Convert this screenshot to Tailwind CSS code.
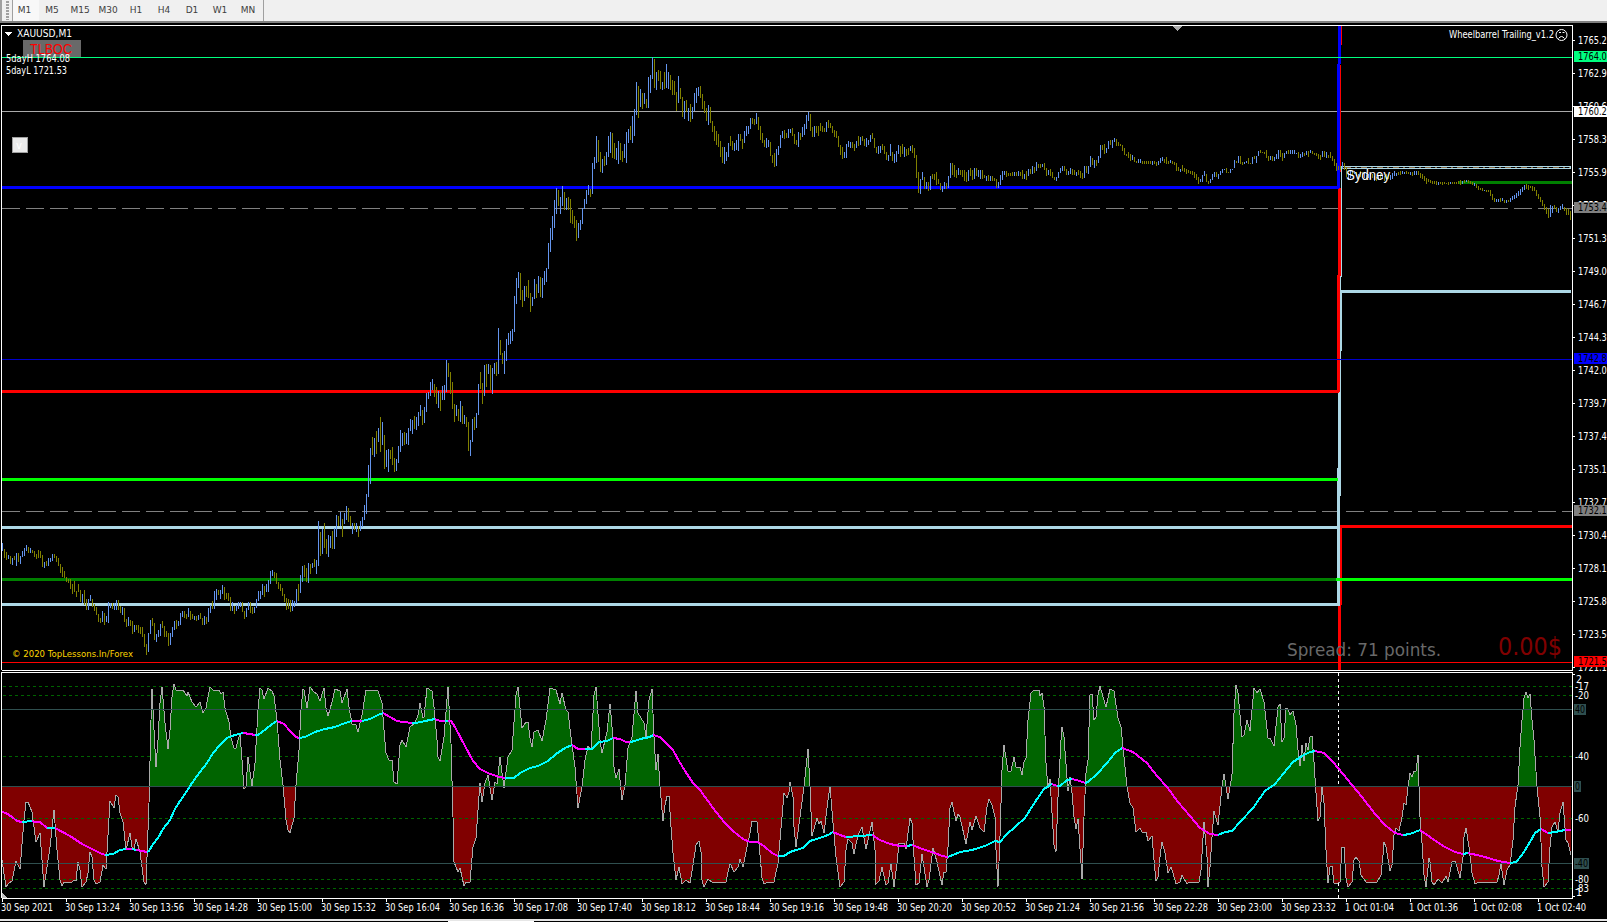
<!DOCTYPE html>
<html lang="en">
<head>
  <meta charset="UTF-8" />
  <meta name="viewport" content="width=device-width, initial-scale=1.0"/>
  <title>XAUUSD,M1</title>
  <script src="https://cdn.jsdelivr.net/npm/@tailwindcss/browser@4"></script>
</head>
<body class="bg-black w-[1607px] h-[922px] overflow-hidden flex flex-col font-['DejaVu_Sans',sans-serif]">

  <header class="h-[23px] shrink-0 flex bg-[#f0f0f0] border-b-2 border-[#808080] text-[#404040]">
    <div class="w-[10px] flex items-center border-l-2 border-[#a0a0a0] pl-1">
      <div class="w-[3px] h-[19px] bg-[repeating-linear-gradient(#a0a0a0_0_2px,#f0f0f0_2px_3px)]"></div>
    </div>
    <nav class="flex h-[21px] text-[9px] leading-[20px] text-center border-r border-[#a0a0a0] w-[254px]">
      <span class="w-[27px] ml-[2px] -mr-px border-l border-[#a0a0a0] bg-[#f8f8f8] pr-[3px]">M1</span>
      <span class="w-7">M5</span>
      <span class="w-7">M15</span>
      <span class="w-7">M30</span>
      <span class="w-7">H1</span>
      <span class="w-7">H4</span>
      <span class="w-7">D1</span>
      <span class="w-7">W1</span>
      <span class="w-7">MN</span>
    </nav>
  </header>

  <main class="h-[896px] shrink-0">
    <svg id="chart" class="block" width="1607" height="896" viewBox="0 23 1607 896" shape-rendering="crispEdges">
      <defs>
        <clipPath id="above"><rect x="2" y="673" width="1570" height="113"/></clipPath>
        <clipPath id="below"><rect x="2" y="787" width="1570" height="111"/></clipPath>
      </defs>

      <!-- price levels -->
      <g id="levels">
        <rect x="2" y="57" width="1570" height="1" fill="#00ff7f"/>
        <rect x="2" y="111" width="1570" height="1" fill="#a9a9a9"/>
        <rect x="2" y="359" width="1570" height="1" fill="#0000cd"/>
        <rect x="2" y="662" width="1570" height="1" fill="#ff0000"/>
        <path d="M2 208.5H1572M2 511.5H1572" stroke="#808080" stroke-dasharray="18 6"/>

        <rect x="1338" y="605" width="3" height="65" fill="#ff0000"/>
        <rect x="1340" y="525" width="2" height="80" fill="#ff0000"/>
        <rect x="1340" y="525" width="232" height="3" fill="#ff0000"/>
        <rect x="1341" y="26" width="1" height="19" fill="#ff0000"/>
        <rect x="1340" y="65" width="1" height="107" fill="#ff0000"/>
        <rect x="1341" y="166" width="1" height="111" fill="#add8e6"/>
        <rect x="1338" y="188" width="3" height="88" fill="#ff0000"/>
        <rect x="1340" y="276" width="1" height="117" fill="#add8e6"/>
        <rect x="1341" y="291" width="1" height="60" fill="#add8e6"/>
        <rect x="1338" y="392" width="3" height="104" fill="#add8e6"/>
        <rect x="1337" y="468" width="3" height="138" fill="#add8e6"/>
        <rect x="1337" y="275" width="3" height="117" fill="#ff0000"/>
        <rect x="2" y="390" width="1337" height="3" fill="#ff0000"/>
        <rect x="2" y="478" width="1336" height="3" fill="#00ff00"/>
        <rect x="2" y="526" width="1336" height="3" fill="#add8e6"/>
        <rect x="2" y="603" width="1337" height="3" fill="#add8e6"/>
        <rect x="2" y="578" width="1334" height="3" fill="#008000"/>
        <rect x="1336" y="578" width="236" height="3" fill="#00ff00"/>
        <rect x="1341" y="290" width="230" height="3" fill="#add8e6"/>
        <rect x="1337" y="64" width="3" height="124" fill="#0000ff"/>
        <rect x="1338" y="26" width="3" height="38" fill="#0000ff"/>
        <rect x="2" y="186" width="1337" height="3" fill="#0000ff"/>
        <rect x="1338" y="57" width="3" height="1" fill="#00ff7f"/>
        <rect x="1337" y="359" width="4" height="1" fill="#0000cd"/>
        <path d="M1341 166.500H1571M1341 168.500H1571M1570.500 166V169" stroke="#add8e6"/>
        <path d="M1345 167.500H1570" stroke="#8b6f4a" stroke-dasharray="6 4 2 4"/>
        <rect x="1458" y="181" width="114" height="3" fill="#008000"/>
      </g>

      <path id="bars-up" stroke="#6495ed" fill="none"/>
      <path id="bars-down" stroke="#808000" fill="none"/>

      <!-- oscillator -->
      <path d="M1338.500 673V898" stroke="#fff" stroke-dasharray="3 3"/>
      <polygon id="osc-up" fill="#006400" clip-path="url(#above)"/>
      <polygon id="osc-down" fill="#800000" clip-path="url(#below)"/>
      <path d="M3 686.500H1572M3 695.500H1572M3 756.500H1572M3 818.500H1572M3 879.500H1572M3 888.500H1572" stroke="#006400" stroke-dasharray="3 3"/>
      <polyline id="osc-line" fill="none" stroke="#a9a9a9"/>
      <path d="M2 709.500H1572M2 786.500H1572M2 863.500H1572" stroke="#2f4f4f"/>
      <g id="average" fill="none" stroke-width="2"></g>

      <!-- frames -->
      <path d="M1.500 670V25.500H1572.500V670.500H1.500M1.500 898V672.500H1572.500V898.500H1.500" fill="none" stroke="#fff"/>
      <path d="M2 893L8 898H2Z" fill="#c0c0c0"/>
      <path d="M1172 26H1183L1177.500 31Z" fill="#a9a9a9"/>
      <path d="M5 32H12L8.500 36Z" fill="#fff"/>

      <rect x="23" y="40" width="58" height="17" fill="#696969"/>
      <rect x="12.500" y="137.500" width="15" height="15" fill="#ebebeb" stroke="#a0a0a0"/>

      <g shape-rendering="auto" fill="none" stroke="#fff">
        <circle cx="1561.500" cy="35" r="5.500"/>
        <path d="M1558.500 38.500Q1561.500 34.500 1564.500 38.500"/>
        <path d="M1559 32.500h2M1562.500 32.500h2"/>
      </g>

      <g id="ticks" stroke="#fff"></g>
      <g id="labels" font-size="10" fill="#fff"></g>
    </svg>
  </main>

  <footer class="h-[3px] flex flex-col shrink-0">
    <div class="h-[2px] bg-[#e6e6e6]"></div>
    <div class="h-px w-[86px] ml-[448px] bg-white"></div>
  </footer>

  <script>
    const ns = 'http://www.w3.org/2000/svg';
    const $ = id => document.getElementById(id);

    // one entry per minute: direction, high y, low y
    const bars = `
      u543-551 d549-558 d552-560 u555-559 d556-564 u558-565 d556-560 u553-566 d553-562 u556-564
      u551-557 u548-556 u545-551 d547-553 u548-553 d550-553 d551-557 d554-559 d550-558 d551-558
      d555-567 u562-568 d561-566 u558-566 u558-562 u554-561 d554-558 d556-562 d558-566 d564-573
      d567-577 d571-578 d577-582 d579-583 d579-589 d584-594 d581-592 d591-597 d584-592 d590-602
      u594-603 d590-605 d599-610 u599-610 u595-601 d599-607 d604-611 d607-615 d614-622 d618-623
      u611-622 d613-625 u616-622 u602-623 u603-608 d603-609 u603-610 u600-610 d600-610 d606-613
      u607-615 d608-622 d619-627 u617-626 d620-626 d621-634 u625-632 d625-630 d625-633 d627-634
      d627-637 d634-647 d644-655 u633-652 u620-634 d618-626 d623-640 u634-642 u630-637 u624-636
      d621-628 d626-637 d631-637 d633-646 u633-645 u627-637 u621-630 d620-629 u621-626 u613-625
      u611-617 d611-618 d614-619 u608-617 d611-620 d614-619 u616-620 d616-621 u615-620 d613-619
      d618-625 u616-625 d617-624 u608-622 u605-613 d601-609 u591-609 u589-600 d590-595 u590-599
      u585-594 d587-600 d593-599 d593-601 d597-611 u602-611 d606-614 u605-611 u602-609 u602-607
      d602-612 d611-619 u608-617 u602-610 d602-613 d607-614 u607-613 u599-608 u591-601 u591-599
      u584-595 d586-597 u584-592 u580-592 u571-584 u570-576 d572-578 d573-584 d582-589 d584-591
      d588-596 d594-602 d598-610 d599-609 d600-612 u600-611 u601-607 u589-604 d584-601 u575-593
      u566-582 d565-577 d568-582 u563-583 d564-574 u563-568 d559-567 u560-574 u521-566 d532-556
      u529-554 d523-548 d539-554 u535-557 u536-548 d531-549 u528-549 u515-537 d516-526 u512-526
      d519-537 u513-524 u506-520 d508-522 d516-526 u523-534 d523-530 u523-532 d526-537 u521-531
      u517-527 u505-520 u494-514 u465-497 u448-484 d437-455 u438-457 d431-454 u428-442 d417-452
      u422-445 d435-469 u450-467 u449-472 d450-459 d447-465 d458-472 u459-471 u446-463 u430-452
      u433-446 d432-445 u433-444 u428-445 u419-431 u420-434 d416-429 u417-430 u412-426 u405-416
      d410-425 u407-423 u393-412 u392-399 u382-396 u379-390 d384-397 d387-404 u391-408 d392-411
      u386-400 u385-400 u360-392 d363-377 d372-394 d382-409 d404-422 u405-416 d409-421 u401-422
      d406-424 u415-424 d417-427 d422-451 u440-456 u419-442 d417-430 u413-428 u384-415 d372-389
      d383-404 u365-396 d364-387 u364-374 d365-390 u368-394 u363-374 d362-376 u328-374 d340-355
      d353-364 u351-374 u339-361 u333-345 u331-344 u329-341 u296-332 u278-304 u272-288 d273-300
      d290-307 u286-301 d286-297 d280-298 d293-312 u297-306 u279-299 d284-298 u276-293 d277-297
      u278-298 u271-285 u268-282 u243-269 u228-252 u216-240 u200-228 u188-214 d190-206 u197-214
      u186-206 d192-210 u198-210 d197-210 d199-223 d210-224 d216-228 d220-241 u223-238 u220-230
      u208-224 u199-209 u190-204 u185-195 d189-197 u163-194 u157-169 u136-163 d140-162 d152-172
      u159-173 d156-166 u152-165 u136-157 u132-153 d133-158 d143-159 u148-160 u141-164 d143-160
      d151-162 u144-158 u132-163 u129-143 d126-140 u116-143 u109-136 u82-115 d86-118 u89-107
      d93-109 u93-104 d99-108 u77-108 u75-93 u57-79 d59-88 u72-90 d70-81 d71-89
      u82-90 d72-89 u64-88 u72-89 d75-90 d80-95 d81-95 d92-111 u76-103 d88-99
      d97-117 u101-119 d100-112 u108-121 d104-122 u107-119 u93-111 u88-103 u87-96 d86-98
      d94-109 d101-113 d108-121 u105-125 d107-123 d121-132 d126-141 d131-145 d134-147 d141-157
      d147-163 u147-164 u152-161 u143-157 d136-146 d141-150 u143-151 u140-150 u134-151 d134-141
      d139-149 u131-143 u126-136 u126-134 u118-129 d118-124 d119-125 u113-124 d117-130 d126-140
      d133-143 d140-147 u138-148 u140-147 d142-156 d155-163 d153-167 u149-166 u146-155 u135-148
      u131-138 d130-139 d133-138 u129-138 u129-133 d128-136 d134-144 d140-145 u132-147 d133-140
      u127-137 u124-135 u115-129 u112-121 d114-131 d127-137 u126-137 d126-133 d126-136 d123-131
      d126-132 d128-132 u122-132 d120-128 d123-128 d126-133 d130-137 d131-138 d136-147 d145-155
      d147-159 u152-158 u144-158 u141-147 u142-148 d142-148 d144-151 u141-148 d136-146 u137-145
      d136-141 d139-146 u138-147 u140-145 u135-142 d133-139 d138-148 d147-153 u146-154 u146-153
      d144-150 d146-154 d152-160 u155-161 u144-156 d152-161 u154-163 u151-162 u145-154 d146-157
      d144-154 u147-157 d149-156 d148-155 u146-151 d145-153 d148-158 d155-178 d172-193 u179-194
      u172-180 d177-189 u182-189 d182-191 u176-190 d174-179 d174-180 d172-185 d179-184 d183-190
      u186-192 u182-189 d183-189 u176-188 u163-178 d163-175 d165-177 d170-178 u168-175 d170-175
      d170-177 d170-181 d172-182 u170-181 d168-176 d170-180 u168-179 d168-176 u170-177 u170-179
      d170-179 d175-178 u176-181 d175-181 u176-181 d176-181 d178-181 d179-188 u182-188 u175-185
      u171-180 u171-175 d171-177 d173-176 d173-176 d172-176 u172-176 d172-176 u171-176 d172-176
      d170-179 u174-179 d171-180 u169-176 d169-174 u166-174 d167-173 u162-171 d164-168 d164-168
      u164-167 d163-170 d168-176 u170-175 d169-176 d172-178 d177-180 u177-181 u172-178 u168-173
      u166-171 d166-171 d169-175 u171-175 u168-174 d169-175 d170-175 u172-176 d170-175 d171-178
      d173-179 u166-178 d166-173 u166-174 u156-167 d158-165 u160-168 d160-166 u156-163 u145-158
      d145-150 d144-154 u148-153 u141-149 d140-145 u140-148 u138-142 d139-146 d142-146 d144-146
      d145-151 d148-155 d154-156 d152-158 d154-161 u155-160 d157-162 d161-163 u159-163 u159-163
      d161-164 d161-164 d161-164 d161-164 d161-164 u161-165 d161-164 d162-166 u161-165 u158-163
      u157-161 d159-163 d157-164 d161-164 u160-163 d161-164 d162-165 d163-171 d167-171 u169-172
      d165-171 d168-172 d169-174 d170-173 d171-174 d171-175 d172-178 d174-180 d177-184 u179-182
      u175-182 u171-176 d174-182 d181-184 u179-183 u174-180 u172-177 d172-177 u174-179 u171-175
      u169-173 u169-170 d168-173 d172-173 u169-173 u169-170 u160-168 d161-163 u156-163 d156-164
      d162-165 u162-164 u161-163 d158-164 d163-164 u157-164 d156-159 u156-163 u151-156 d150-153
      d152-153 d152-154 d150-158 d156-161 u156-160 d156-161 u157-161 u154-159 u150-159 d150-157
      d153-161 u153-158 u151-154 d150-154 u150-154 u150-154 u150-154 u153-154 d152-158 u154-158
      u152-157 d153-156 u151-155 d151-157 u150-153 d151-154 d153-155 d153-156 d154-159 d155-160
      u151-157 d151-157 u152-158 d155-158 d152-158 d156-161 d159-166 d163-171 d166-170 d166-170
      u162-169 d163-170 d167-177 u173-180 u171-178 d172-176 u171-174 d172-176 u174-178 d171-177
      d172-178 u173-178 d175-180 u174-178 u174-179 d174-178 u176-181 d177-181 u176-180 d174-180
      u175-179 d176-181 d174-178 d175-179 u175-180 u173-179 u171-176 u173-176 d172-175 d171-175
      u171-174 u172-174 d171-174 d172-174 u172-175 d172-176 u171-175 u171-175 d171-175 d173-178
      d174-179 d176-181 d178-184 d179-182 d180-183 d181-184 d181-184 d181-185 u182-185 d182-184
      d182-185 d182-184 d183-184 d182-185 u182-184 d182-184 d182-184 d182-184 d181-184 d180-185
      u181-184 d180-183 u180-182 d180-183 d181-184 d182-185 u183-186 d184-188 d186-190 d188-190
      d188-191 u190-191 d190-192 d190-192 d190-196 d194-200 d198-202 u199-202 u199-202 d198-202
      u198-201 d200-203 u200-203 d200-202 u198-202 u196-200 u195-199 u193-198 u191-196 u189-195
      u187-192 u185-190 d184-189 d185-190 d186-188 d186-191 d187-191 d190-196 d194-199 d197-202
      d200-206 d204-210 d207-214 d209-218 u205-217 u206-213 d205-209 d207-212 u208-213 u206-210
      u204-209 d207-211 d208-215 d209-215 d211-220
    `.trim().split(/\s+/);

    const paths = { u: '', d: '' };
    bars.forEach((bar, i) => {
      const [top, bottom] = bar.slice(1).split('-').map(Number);
      paths[bar[0]] += `M${2.5 + i * 2} ${top}V${bottom}`;
    });
    $('bars-up').setAttribute('d', paths.u);
    $('bars-down').setAttribute('d', paths.d);

    const osc = `
      2,860 6,887 9,883 12,881 16,861 20,869 24,820 26,802 28,802 30,807 32,812 34,827 36,842 40,833 44,887 50,847
      54,810 57,850 60,880 62,886 64,882 72,882 74,880 76,881 78,862 80,870 82,887 86,882 88,873 90,852 92,857 94,880
      96,884 100,882 103,865 106,869 110,801 114,808 116,795 118,797 120,813 123,822 126,850 130,833 132,847 134,850
      136,839 140,852 144,882 146,885 149,803 151,720 152,689 154,730 156,767 158,740 160,703 162,687 165,723 168,749
      170,730 172,697 174,684 176,690 183,690 187,696 188,692 192,702 196,707 200,702 203,713 206,708 208,697 210,687
      213,690 219,690 221,694 223,692 225,708 229,722 231,738 234,748 236,748 240,733 242,760 244,789 246,787 248,757
      252,786 255,763 258,710 260,688 262,690 264,699 268,688 272,691 274,696 277,720 280,760 283,785 286,820 288,830
      290,833 294,818 296,785 299,750 301,710 303,689 304,690 307,708 310,687 314,692 317,694 320,701 324,688 326,708
      328,716 332,702 335,689 340,691 342,703 347,689 349,707 352,724 356,725 358,732 362,715 366,690 378,691 382,703
      384,730 386,753 389,760 392,760 394,782 397,784 400,745 402,740 406,747 410,727 415,723 418,715 420,703 423,718
      424,717 427,688 432,691 434,707 437,740 438,757 440,761 444,737 448,687 451,743 453,817 454,862 458,872 460,868
      464,886 466,882 470,882 473,847 476,838 478,810 480,783 482,802 485,783 488,775 492,800 495,782 497,784 500,757
      504,788 508,757 512,750 516,695 518,687 522,728 526,722 528,722 530,738 532,747 534,732 538,730 542,741 546,720
      550,688 556,690 560,704 562,693 566,710 568,712 571,737 575,767 578,808 582,787 585,760 588,746 591,750 594,695
      596,687 600,740 602,753 607,732 610,704 613,738 614,767 616,778 619,769 622,800 625,785 628,748 632,737 636,691
      638,713 644,723 646,737 649,700 652,689 654,737 656,770 658,754 660,787 663,821 665,805 667,796 669,796 671,827
      673,853 676,880 679,867 682,884 686,880 690,883 693,865 696,845 699,841 701,852 702,880 704,887 708,879 712,882
      726,882 730,863 734,872 738,867 740,859 743,867 747,847 750,833 752,821 757,822 759,843 762,878 764,884 768,882
      774,882 778,863 782,817 784,793 787,798 789,792 790,782 793,797 794,827 796,847 800,817 804,787 806,767 808,749
      810,787 812,836 817,818 819,824 821,821 824,833 828,800 830,786 833,823 836,857 840,887 844,882 846,850 848,839
      852,843 854,854 858,835 862,827 866,849 872,822 875,850 876,884 879,881 882,867 886,885 888,883 891,864 894,887
      897,863 899,843 904,843 906,849 910,818 912,823 914,857 916,885 919,883 922,854 927,887 929,880 933,848 937,862
      942,885 944,872 946,872 948,847 950,808 952,802 956,821 958,814 960,817 966,844 970,822 972,830 976,816 980,828
      984,832 987,807 989,799 992,805 995,817 996,850 998,887 1000,837 1002,770 1004,745 1008,771 1011,771 1014,757
      1016,767 1020,767 1022,775 1024,762 1026,758 1028,720 1031,693 1033,691 1039,690 1040,696 1042,693 1044,707
      1046,763 1048,788 1050,779 1052,813 1054,845 1056,852 1058,797 1061,740 1062,727 1064,737 1068,791 1070,777
      1072,793 1074,817 1076,829 1078,819 1082,879 1084,817 1086,773 1088,760 1090,695 1092,694 1094,720 1096,717
      1098,695 1100,686 1106,707 1110,689 1114,691 1118,718 1121,727 1124,757 1127,787 1130,803 1133,808 1136,832
      1140,828 1142,832 1146,832 1148,841 1152,836 1154,860 1156,881 1158,877 1160,857 1162,842 1165,853 1168,873
      1171,867 1173,873 1176,884 1180,882 1182,875 1187,884 1189,882 1199,882 1201,870 1204,822 1207,857 1208,887
      1210,867 1212,837 1214,811 1218,825 1222,787 1224,774 1228,799 1232,775 1234,713 1236,685 1238,693 1242,737
      1244,735 1247,720 1250,731 1254,688 1257,693 1260,689 1264,702 1268,738 1270,738 1274,746 1278,707 1280,704
      1282,742 1284,738 1286,708 1288,709 1290,715 1293,711 1296,725 1298,750 1300,766 1302,745 1304,761 1306,743
      1308,750 1310,737 1312,736 1314,762 1316,793 1318,821 1320,817 1322,787 1324,803 1326,850 1328,883 1330,867
      1332,866 1334,883 1336,884 1340,882 1342,847 1344,847 1346,878 1348,887 1352,882 1354,860 1356,857 1359,861
      1361,875 1366,882 1377,882 1381,875 1383,855 1384,842 1386,847 1390,871 1392,865 1394,835 1396,828 1399,831
      1402,817 1404,803 1406,805 1408,787 1410,773 1412,777 1414,771 1416,771 1418,755 1420,817 1422,843 1424,875
      1426,887 1429,858 1430,862 1432,882 1434,885 1438,879 1442,883 1446,876 1448,882 1452,862 1455,861 1457,867
      1460,878 1463,857 1464,837 1466,828 1469,847 1472,873 1475,884 1479,882 1497,882 1499,875 1501,864 1504,885
      1507,870 1510,865 1513,840 1515,807 1518,785 1520,747 1522,720 1524,698 1526,692 1528,698 1530,694 1532,720
      1534,740 1537,787 1540,817 1542,867 1544,887 1548,882 1550,847 1552,827 1555,822 1558,832 1560,813 1563,802
      1566,840 1568,843 1571,855
    `.trim().replace(/\s+/g, ' ');
    $('osc-line').setAttribute('points', osc);
    $('osc-up').setAttribute('points', `2,786 ${osc} 1571,786`);
    $('osc-down').setAttribute('points', `2,787 ${osc} 1571,787`);

    // m = falling, c = rising; each run starts where the previous one ended
    const average = `
      m 2,812 6,813 12,817 17,821 22,822 c 32,821 m 34,822 40,822 47,828 c 55,828 m 70,836 82,844 90,848 100,853 105,855
      c 113,854 120,850 126,849 m 132,849 c 136,850 m 142,851 147,852 c 149,851 153,844 158,838 163,829 170,820 175,809
      180,801 187,791 192,783 200,772 207,763 213,753 220,745 227,738 235,735 243,733 m 250,734 255,735 c 258,735
      266,729 272,724 277,721 m 284,724 290,731 296,737 299,738 c 305,737 315,732 325,729 335,727 345,723 352,721
      m 362,721 c 370,719 378,715 383,713 m 390,717 397,721 403,722 412,723 c 416,723 425,721 435,719 m 440,721 445,721
      c 448,721 m 451,721 455,727 465,746 473,761 480,769 490,774 500,777 505,778 c 514,778 520,773 530,768 538,766
      548,761 556,754 565,748 572,745 m 578,749 585,749 c 592,749 599,742 607,741 613,738 m 620,739 626,742 630,742
      c 635,741 640,739 650,737 653,735 m 660,737 666,743 673,750 679,761 685,771 693,783 700,790 708,801 716,812
      725,823 733,831 743,839 750,842 758,842 765,847 772,853 778,856 c 784,856 790,852 796,850 803,848 810,841 820,838
      828,835 833,832 m 840,835 846,837 c 860,836 872,835 m 880,840 890,844 900,846 907,846 c 912,845 m 925,850 935,853
      942,856 948,857 c 960,852 972,850 985,846 995,841 1000,842 1007,834 1015,827 1025,818 1030,810 1037,799 1044,789
      1052,784 m 1057,786 c 1060,786 1067,780 1072,779 m 1080,781 1085,783 c 1088,782 1097,774 1107,763 1115,753
      1122,748 m 1133,752 1147,763 1157,776 1167,787 1178,802 1190,816 1200,828 1210,834 1218,835 c 1225,832 1232,831
      1240,822 1253,808 1265,791 1275,784 1283,774 1293,762 1302,756 1310,752 1315,751 m 1324,753 1333,762 1343,774
      1352,785 1362,797 1375,814 1385,825 1395,833 1403,835 c 1410,834 1420,830 m 1430,837 1443,846 1455,852 1463,854
      c 1468,853 m 1485,857 1498,861 1510,863 c 1516,862 1522,855 1530,842 1535,833 1541,829 m 1548,833 c 1555,832
      1565,830 m 1571,830
    `.trim().split(/\s+/);

    let run = null;
    let last = '';
    average.forEach(token => {
      if (token === 'm' || token === 'c') {
        run = document.createElementNS(ns, 'polyline');
        run.setAttribute('stroke', token === 'm' ? '#ff00ff' : '#00ffff');
        run.setAttribute('points', last);
        $('average').appendChild(run);
      } else {
        run.setAttribute('points', `${run.getAttribute('points')} ${token}`);
        last = token;
      }
    });

    function label(text, x, y, width, opts = {}) {
      const el = document.createElementNS(ns, 'text');
      el.textContent = text;
      el.setAttribute('x', x);
      el.setAttribute('y', y);
      el.setAttribute('textLength', width);
      el.setAttribute('lengthAdjust', 'spacingAndGlyphs');
      if (opts.fill) el.setAttribute('fill', opts.fill);
      if (opts.size) el.setAttribute('font-size', opts.size);
      if (opts.font) el.setAttribute('font-family', opts.font);
      $('labels').appendChild(el);
    }

    function tick(d) {
      const el = document.createElementNS(ns, 'path');
      el.setAttribute('d', d);
      $('ticks').appendChild(el);
    }

    function tag(text, x, y, width, boxX, boxW, color) {
      const el = document.createElementNS(ns, 'rect');
      el.setAttribute('x', boxX);
      el.setAttribute('y', y);
      el.setAttribute('width', boxW);
      el.setAttribute('height', 11);
      el.setAttribute('fill', color);
      $('labels').appendChild(el);
      label(text, x, y + 9, width, { fill: '#000' });
    }

    // price scale
    ['1765.25', '1762.90', '1760.60', '1758.30', '1755.95', '1753.65', '1751.30', '1749.00', '1746.70', '1744.35',
     '1742.05', '1739.70', '1737.40', '1735.10', '1732.75', '1730.45', '1728.10', '1725.80', '1723.50', '1721.15'
    ].forEach((price, i) => {
      const y = 40 + i * 33;
      tick(`M1573 ${y + 0.5}h2`);
      label(price, 1578, y + 4, 34);
    });
    tag('1764.08', 1578, 51, 34, 1574, 33, '#00ff7f');
    tag('1760.29', 1578, 106, 34, 1574, 33, '#ffffff');
    tag('1753.44', 1578, 202, 34, 1574, 33, '#808080');
    tag('1742.80', 1578, 353, 34, 1574, 33, '#0000ff');
    tag('1732.17', 1578, 505, 34, 1574, 33, '#808080');
    tag('1721.53', 1578, 656, 34, 1574, 33, '#ff0000');

    // oscillator scale
    label('2', 1576, 683, 6);
    label('-17', 1575, 690, 14);
    label('-20', 1575, 699, 14);
    label('-40', 1575, 760, 14);
    label('-60', 1575, 822, 14);
    label('-80', 1575, 883, 14);
    label('-83', 1575, 892, 14);
    label('1', 1576, 896, 6);
    tag('40', 1575, 704, 10, 1574, 12, '#2f4f4f');
    tag('0', 1575, 781, 5, 1574, 7, '#2f4f4f');
    tag('-40', 1575, 858, 13, 1574, 15, '#2f4f4f');
    tick('M1573 674.5h2M1573 896.5h2');

    // time scale
    ['30 Sep 2021', '30 Sep 13:24', '30 Sep 13:56', '30 Sep 14:28', '30 Sep 15:00', '30 Sep 15:32', '30 Sep 16:04',
     '30 Sep 16:36', '30 Sep 17:08', '30 Sep 17:40', '30 Sep 18:12', '30 Sep 18:44', '30 Sep 19:16', '30 Sep 19:48',
     '30 Sep 20:20', '30 Sep 20:52', '30 Sep 21:24', '30 Sep 21:56', '30 Sep 22:28', '30 Sep 23:00', '30 Sep 23:32',
     '1 Oct 01:04', '1 Oct 01:36', '1 Oct 02:08', '1 Oct 02:40'
    ].forEach((time, i) => {
      tick(`M${2.5 + i * 64} 899v3`);
      label(time, 1 + i * 64, 911, time.startsWith('1') ? 49 : i ? 55 : 52);
    });

    // chart texts
    label('XAUUSD,M1', 17, 37, 55);
    label('TLBOC', 30, 53.5, 42, { fill: '#ff0000', size: 14, font: 'Liberation Sans' });
    label('5dayH 1764.08', 6, 62, 64);
    label('5dayL 1721.53', 6, 74, 61);
    label('v', 16, 149, 6, { size: 11 });
    label('Wheelbarrel Trailing_v1.2', 1449, 38, 105);
    label('Sydney', 1346, 180, 44, { size: 14, font: 'Liberation Sans' });
    label('© 2020 TopLessons.In/Forex', 12, 657, 121, { fill: '#ffd700', size: 9.5 });
    label('Spread: 71 points.', 1287, 656, 154, { fill: '#696969', size: 18.5 });
    label('0.00$', 1498, 655, 64, { fill: '#800000', size: 24.5 });
  </script>
</body>
</html>
